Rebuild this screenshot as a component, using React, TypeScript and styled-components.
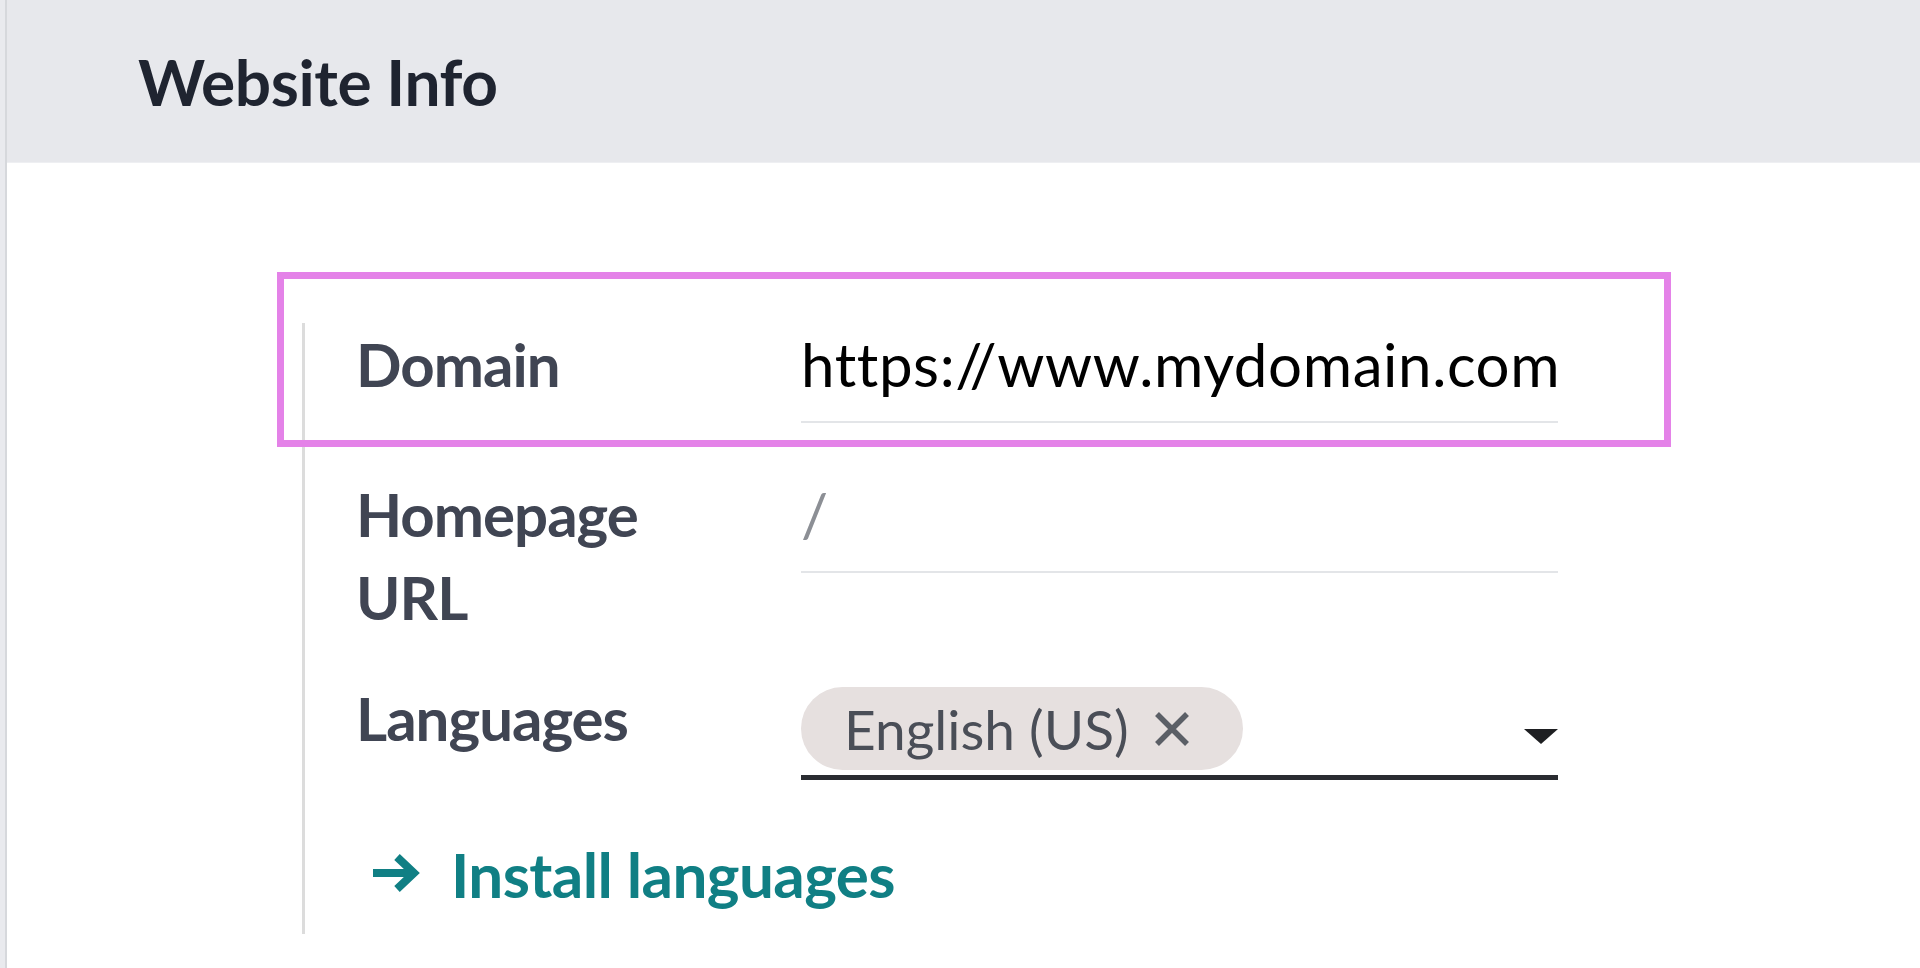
import React from "react";
import styled, { createGlobalStyle } from "styled-components";

const Global = createGlobalStyle`
  html, body { margin: 0; padding: 0; background: #ffffff; }
  body { font-family: Lato, "Noto Sans", sans-serif; }
  * { box-sizing: border-box; }
`;

const Page = styled.div`
  min-height: 100vh;
  border-left: 5px solid #e9eaee;
  display: flex;
`;

const Sheet = styled.div`
  flex: 1;
  min-height: 100vh;
  border-left: 2px solid #d6d8dc;
  display: flex;
  flex-direction: column;
`;

const Header = styled.header`
  height: 163px;
  background: #e7e8ec;
  display: flex;
  align-items: center;
  padding-left: 131px;
  border-bottom: 1px solid #eeeff2;
`;

const Title = styled.h2`
  margin: 0;
  font-family: Lato, sans-serif;
  font-weight: 700;
  font-size: 64px;
  color: #1f2430;
  letter-spacing: -0.4px;
`;

const Content = styled.main`
  padding: 160px 0 0 295px;
`;

const SettingBox = styled.section`
  width: 1300px;
  border-left: 3px solid #dcdcdc;
  padding: 0 0 18px 51px;
  display: flex;
  flex-direction: column;
`;

const Row = styled.div<{ $mb?: number }>`
  position: relative;
  display: grid;
  grid-template-columns: 445px 757px;
  align-items: start;
  margin-bottom: ${(p) => p.$mb ?? 0}px;
`;

const Label = styled.label`
  font-family: Lato, sans-serif;
  font-weight: 700;
  font-size: 60px;
  line-height: 83px;
  color: #404553;
  width: 300px;
  letter-spacing: -1px;
`;

const TextField = styled.div<{ $placeholder?: boolean }>`
  font-family: Lato, sans-serif;
  font-size: 60px;
  line-height: 83px;
  padding-bottom: 15px;
  border-bottom: 2px solid #e3e5e8;
  color: ${(p) => (p.$placeholder ? "#8c8f95" : "#000000")};
  font-weight: 400;
  letter-spacing: ${(p) => (p.$placeholder ? 0 : 0.6)}px;
  white-space: nowrap;
`;

const TagField = styled.div`
  display: flex;
  align-items: center;
  justify-content: space-between;
  padding: 10px 0 5px 0;
  border-bottom: 5px solid #2a2c31;
`;

const Tag = styled.span`
  display: inline-flex;
  align-items: center;
  height: 83px;
  padding: 0 52px 0 43px;
  border-radius: 42px;
  background: #e6e0df;
  font-family: Lato, sans-serif;
  font-size: 55px;
  color: #4a4e57;
  gap: 24px;
`;

const TagClose = styled.span`
  display: inline-flex;
  width: 38px;
  height: 38px;
`;

const Caret = styled.span`
  display: inline-flex;
  width: 34px;
  height: 15px;
  margin-top: 16px;
`;

const Overlay = styled.div`
  position: absolute;
  left: -79px;
  top: -51px;
  width: 1394px;
  height: 175px;
  border: 7px solid #e482e8;
  pointer-events: none;
`;

const LinkRow = styled.a`
  display: inline-flex;
  align-items: center;
  gap: 31px;
  margin-left: 14px;
  font-family: Lato, sans-serif;
  font-weight: 700;
  font-size: 62px;
  line-height: 83px;
  color: #107f84;
  text-decoration: none;
  letter-spacing: -0.6px;
`;

const Arrow = styled.span`
  display: inline-flex;
  width: 50px;
  height: 40px;
  margin-top: -4px;
`;

export default function App() {
  return (
    <>
      <Global />
      <Page>
        <Sheet>
          <Header>
            <Title>Website Info</Title>
          </Header>
          <Content>
            <SettingBox>
              <Row $mb={50}>
                <Overlay />
                <Label>Domain</Label>
                <TextField>https://www.mydomain.com</TextField>
              </Row>
              <Row $mb={38}>
                <Label>
                  Homepage
                  <br />
                  URL
                </Label>
                <TextField $placeholder>/</TextField>
              </Row>
              <Row $mb={53}>
                <Label>Languages</Label>
                <TagField>
                  <Tag>
                    English (US)
                    <TagClose>
                      <svg width="38" height="38" viewBox="0 0 38 38">
                        <path
                          d="M4 4 L34 34 M34 4 L4 34"
                          stroke="#5b5f66"
                          strokeWidth="5.5"
                          strokeLinecap="butt"
                        />
                      </svg>
                    </TagClose>
                  </Tag>
                  <Caret>
                    <svg width="34" height="15" viewBox="0 0 34 15">
                      <polygon points="0,0 34,0 17,15" fill="#1e1f22" />
                    </svg>
                  </Caret>
                </TagField>
              </Row>
              <div>
                <LinkRow href="#">
                  <Arrow>
                    <svg width="50" height="40" viewBox="0 0 50 40">
                      <path
                        d="M3 20 H44 M27 4 L44 20 L27 36"
                        stroke="#107f84"
                        strokeWidth="8"
                        fill="none"
                        strokeLinejoin="miter"
                      />
                    </svg>
                  </Arrow>
                  Install languages
                </LinkRow>
              </div>
            </SettingBox>
          </Content>
        </Sheet>
      </Page>
    </>
  );
}
